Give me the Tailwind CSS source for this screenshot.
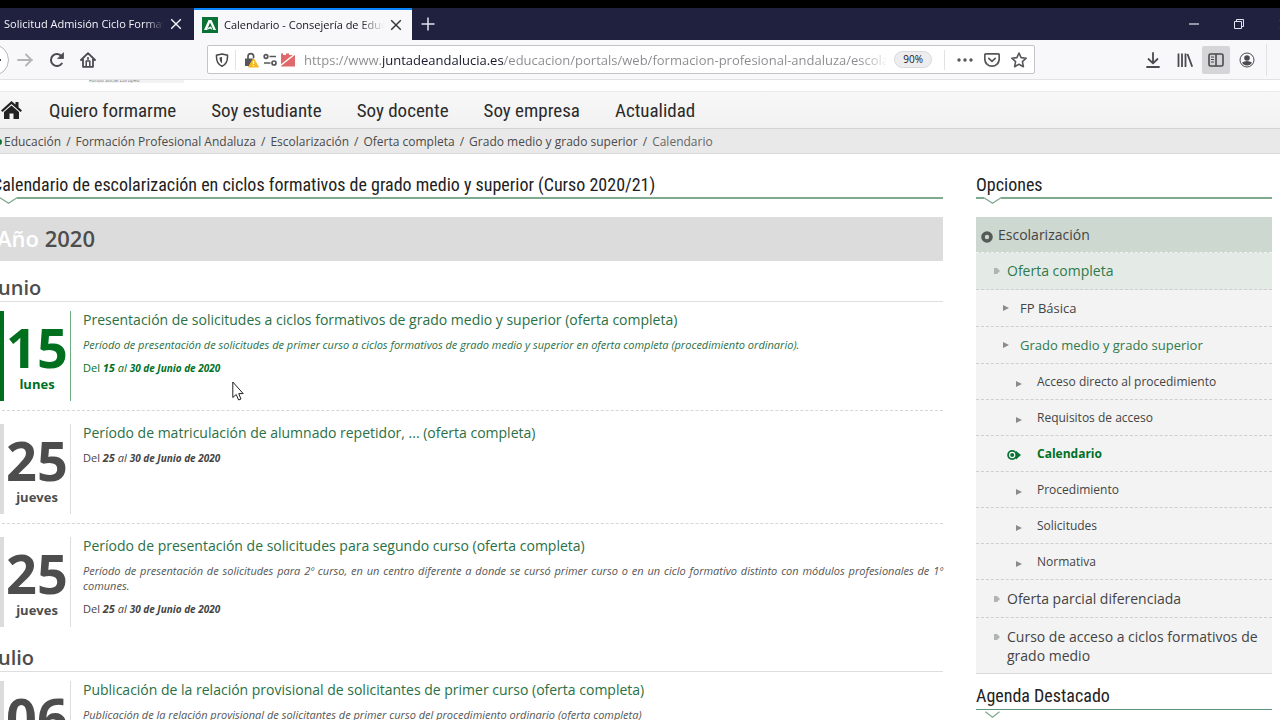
<!DOCTYPE html>
<html lang="es">
<head>
<meta charset="utf-8">
<meta name="viewport" content="width=device-width, initial-scale=1">
<title>Calendario - Consejería de Educación</title>
<script src="https://cdn.jsdelivr.net/npm/@tailwindcss/browser@4"></script>
</head>
<body class="flex h-screen flex-col overflow-hidden bg-white font-['Open_Sans',sans-serif] text-[#444]">
<svg class="hidden" aria-hidden="true">
  <symbol id="tri" viewBox="0 0 6 6"><path d="M0 0L6 3L0 6Z" fill="#8b8b8b"/></symbol>
  <symbol id="dee" viewBox="0 0 6 8"><path d="M0 1H3L6 4L3 7H0Z" fill="#b0b5b2"/></symbol>
  <symbol id="x" viewBox="0 0 10 10"><path d="M1 1L9 9M9 1L1 9" stroke="currentColor" stroke-width="1.2" fill="none"/></symbol>
</svg>

<!-- Browser window -->
<header class="shrink-0 border-t-8 border-black">
  <div class="flex h-8 items-stretch bg-[#20203f]">
    <div class="flex w-[194px] shrink-0 items-center pr-3 pl-1 text-[#f4f4fa]">
      <span class="w-40 overflow-hidden pt-px text-[11px] whitespace-nowrap [mask-image:linear-gradient(to_right,#000_88%,transparent)]">Solicitud Admisión Ciclo Formativo</span>
      <button class="ml-auto" aria-label="Cerrar pestaña"><svg class="size-3"><use href="#x"/></svg></button>
    </div>
    <div class="flex w-[218px] shrink-0 items-center border-t-2 border-[#0a84ff] bg-[#f8f8fa] pr-[10px] pl-2 text-[#15141a]">
      <svg class="mr-[6px] size-4 shrink-0" viewBox="0 0 16 16"><path fill="#0a7135" d="M0 0h16v16H0z"/><path d="M2 13L6.500 3H9.500L14 13H11.500L8 5.500L5 13Z" fill="#fff"/><path d="M6.500 10.500L9 9.500L10.500 13L8 11.500L5 13Z" fill="#fff"/></svg>
      <span class="w-40 overflow-hidden text-[11px] whitespace-nowrap [mask-image:linear-gradient(to_right,#000_85%,transparent)]">Calendario - Consejería de Educación</span>
      <button class="ml-auto text-[#333]" aria-label="Cerrar pestaña"><svg class="size-3"><use href="#x"/></svg></button>
    </div>
    <button class="ml-[6px] w-5 text-[#e4e4ee]" aria-label="Nueva pestaña"><svg class="mx-auto size-4" viewBox="0 0 16 16"><path d="M8 1.500V14.500M1.500 8H14.500" stroke="currentColor" stroke-width="1.500"/></svg></button>
    <div class="-mr-[9px] ml-auto flex items-center gap-[35px] text-[#e4e4ee]">
      <button aria-label="Minimizar"><svg class="size-[10px]" viewBox="0 0 10 10"><path d="M0 5H10" stroke="currentColor" stroke-width="1.200"/></svg></button>
      <button aria-label="Restaurar"><svg class="size-[10px]" viewBox="0 0 10 10" fill="none" stroke="currentColor"><path d="M.5 2.500H7.500V9.500H.5ZM2.500 2.500V.5H9.500V7.500H7.500"/></svg></button>
      <button aria-label="Cerrar"><svg class="size-[10px]"><use href="#x"/></svg></button>
    </div>
  </div>

  <div class="flex h-10 items-center border-b border-[#e2e2e4] bg-[#f8f8fa] text-[#4a4a4f]">
    <button class="-ml-[23px] grid size-8 shrink-0 place-items-center rounded-full border border-[#b9b9bd] bg-white" aria-label="Atrás"><svg class="size-4" viewBox="0 0 16 16" fill="none" stroke="currentColor" stroke-width="1.800"><path d="M17 8H2M8 3L3 8L8 13"/></svg></button>
    <button class="ml-2 text-[#b4b4b6]" aria-label="Adelante"><svg class="size-4" viewBox="0 0 16 16" fill="none" stroke="currentColor" stroke-width="1.800" stroke-linecap="round" stroke-linejoin="round"><path d="M1 8H15M9 2.500L14.500 8L9 13.500"/></svg></button>
    <button class="ml-4" aria-label="Recargar"><svg class="size-4" viewBox="0 0 16 16" fill="none" stroke="currentColor" stroke-width="2" stroke-linecap="round"><path d="M12.800 11.500A6 6 0 1 1 12.500 4"/><path d="M14.500 1V6.500H9Z" fill="currentColor" stroke-width=".8"/></svg></button>
    <button class="ml-[15px]" aria-label="Inicio"><svg class="size-4" viewBox="0 0 16 16" fill="none" stroke="currentColor" stroke-width="1.800" stroke-linecap="round" stroke-linejoin="round"><path d="M1 8L8 1.200L15 8M3 7.500V14.800H13V7.500"/><path d="M6.200 14.500V9H9.800V14.500" stroke-width="1.500"/><path d="M8 6V7" /></svg></button>

    <div class="ml-[111px] flex h-[29px] w-[828px] shrink items-center rounded-xs border border-[#c4c4c8] bg-white px-[7px]">
      <svg class="size-[14px] shrink-0" viewBox="0 0 14 14" fill="none" stroke="currentColor" stroke-width="1.500"><path d="M7 1L12.500 2.200C12.800 7.500 11 11.500 7 13.200C3 11.500 1.200 7.500 1.500 2.200Z"/><path d="M7 4V10.200C5 9 4.500 7 4.500 4.500Z" fill="currentColor" stroke="none"/></svg>
      <span class="mr-2 ml-[6px] h-5 w-px bg-[#e2e2e4]"></span>
      <svg class="size-4 shrink-0" viewBox="0 0 16 16"><path d="M4 7V4.500a2.800 2.800 0 0 1 5.600 0V6" fill="none" stroke="#57575b" stroke-width="1.700"/><path d="M1 6.500H10V14H1Z" fill="#57575b"/><path d="M9.500 6.500L14.500 15H4.500Z" fill="#f5b921" stroke="#f5b921" stroke-linejoin="round"/><path d="M9.500 9V12M9.500 13V14" stroke="#fff" stroke-width="1.300"/></svg>
      <svg class="ml-[2px] size-4 shrink-0" viewBox="0 0 16 16" fill="none" stroke="#57575b" stroke-width="1.700"><circle cx="4" cy="4.500" r="1.800"/><path d="M7.500 4.500H14M2 11H8.500"/><circle cx="12" cy="11" r="2"/></svg>
      <svg class="ml-[2px] size-4 shrink-0" viewBox="0 0 16 16"><path d="M1 1.500H3V3H6V1.500H9V3H15V14.500H1Z" fill="#e0696b"/><path d="M.5 13.500L15 2" stroke="#fff" stroke-width="1.500"/></svg>
      <input type="text" aria-label="Dirección" class="ml-2 w-0 flex-1 bg-[linear-gradient(to_right,#8a8a8e_78px,#17172b_78px,#17172b_200px,#8a8a8e_200px,#8a8a8e_555px,transparent_586px)] bg-clip-text pt-[2px] text-[13px] text-transparent outline-none" value="https://www.juntadeandalucia.es/educacion/portals/web/formacion-profesional-andaluza/escolarizacion">
      <button class="ml-2 h-[17px] rounded-full border border-[#d9d9dc] bg-[#ededf0] px-2 text-[10px] leading-[15px] text-[#15141a]">90%</button>
      <span class="mr-3 ml-3 h-5 w-px bg-[#e2e2e4]"></span>
      <button aria-label="Acciones"><svg class="size-4" viewBox="0 0 16 16" fill="#57575b"><circle cx="2" cy="8" r="1.700"/><circle cx="8" cy="8" r="1.700"/><circle cx="14" cy="8" r="1.700"/></svg></button>
      <button class="ml-[11px]" aria-label="Guardar en Pocket"><svg class="size-4" viewBox="0 0 16 16" fill="none" stroke="#57575b" stroke-width="1.700" stroke-linecap="round" stroke-linejoin="round"><path d="M2 1.800H14Q15.200 1.800 15.200 3V7A7.200 7.200 0 0 1 .8 7V3Q.8 1.800 2 1.800Z"/><path d="M4.800 6.300L8 9.300L11.200 6.300"/></svg></button>
      <button class="ml-[11px]" aria-label="Marcador"><svg class="size-4" viewBox="0 0 16 16" fill="none" stroke="#57575b" stroke-width="1.600" stroke-linejoin="round"><path d="M8 1L10.100 5.600L15.200 6.200L11.400 9.600L12.400 14.700L8 12.200L3.600 14.700L4.600 9.600L.8 6.200L5.900 5.600Z"/></svg></button>
    </div>

    <div class="ml-auto flex items-center">
      <button aria-label="Descargas"><svg class="size-4" viewBox="0 0 16 16" fill="none" stroke="currentColor" stroke-width="1.800" stroke-linecap="round" stroke-linejoin="round"><path d="M8 1V11M3.500 7L8 11.300L12.500 7M2 15H14"/></svg></button>
      <button class="ml-4" aria-label="Biblioteca"><svg class="size-4" viewBox="0 0 16 16" fill="none" stroke="currentColor" stroke-width="1.800"><path d="M1.500 1.500V15M5 1.500V15M8.500 1.500V15M10.500 2L15.200 14.800"/></svg></button>
      <button class="ml-[9px] grid size-7 place-items-center rounded-xs bg-[#d5d5d7]" aria-label="Barra lateral"><svg class="size-4" viewBox="0 0 16 16" fill="none" stroke="currentColor" stroke-width="1.600"><rect x="1" y="2" width="14" height="12" rx="1.500"/><path d="M8 2V14" /><path d="M3 5H6M3 7.500H6M3 10H6" stroke-width="1"/></svg></button>
      <button class="ml-[9px]" aria-label="Cuenta"><svg class="size-4" viewBox="0 0 16 16"><circle cx="8" cy="8" r="7" fill="none" stroke="currentColor" stroke-width="1"/><circle cx="8" cy="6" r="2.800" fill="currentColor"/><path d="M3 10.500Q8 7.500 13 10.500Q11.500 13.500 8 13.500Q4.500 13.500 3 10.500Z" fill="currentColor"/></svg></button>
      <span class="mr-[13px] ml-[11px] h-8 w-px bg-[#e2e2e4]"></span>
    </div>
  </div>
</header>

<!-- Web page -->
<div class="relative min-h-0 flex-1 overflow-hidden">
  <div class="flex h-[11px] items-start pl-[89px]"><span class="h-[3px] w-[95px] overflow-hidden bg-[#f3f3f3] text-[5px] leading-[1px] text-[#777]">Fondo Social Europeo</span></div>

  <nav class="flex h-[38px] items-center gap-[35px] border-t border-b border-t-[#ececec] border-b-[#d2d2d2] bg-linear-to-b from-[#f8f8f8] to-[#f1f1f1] pt-px font-['Liberation_Sans_Narrow','Arial_Narrow','Roboto_Condensed','Liberation_Sans',sans-serif] text-[19px] leading-6 text-[#2b2b2b]" aria-label="Principal">
    <a href="#" class="-mr-2" aria-label="Inicio"><svg class="ml-px h-[19px] w-[21px]" viewBox="0 0 21 19" fill="#222"><path d="M10.500 0L14.500 3.500V1H17.500V6.200L21 9.500L19.500 11L10.500 3L1.500 11L0 9.500Z"/><path d="M10.500 4.500L18 11V18H12.500V12.500H8.500V18H3V11Z"/></svg></a>
    <a href="#">Quiero formarme</a><a href="#">Soy estudiante</a><a href="#">Soy docente</a><a href="#">Soy empresa</a><a href="#">Actualidad</a>
  </nav>

  <nav class="flex h-[25px] items-center border-b border-[#d9d9d9] bg-[#e9e9e9] pt-[2px] text-xs text-[#4a4a4a]" aria-label="Ruta">
    <span class="-ml-1 mr-[2px] size-[6px] rounded-full bg-[#0a7135]"></span>
    <ol class="flex gap-[5px] whitespace-nowrap">
      <li><a href="#">Educación</a></li><li>/</li>
      <li><a href="#">Formación Profesional Andaluza</a></li><li>/</li>
      <li><a href="#">Escolarización</a></li><li>/</li>
      <li><a href="#">Oferta completa</a></li><li>/</li>
      <li><a href="#">Grado medio y grado superior</a></li><li>/</li>
      <li class="text-[#666]">Calendario</li>
    </ol>
  </nav>

  <div class="mr-2 -ml-2 grid grid-cols-[minmax(0,1fr)_296px] gap-[33px] pt-[19px]">
    <main>
      <h1 class="font-['Liberation_Sans_Narrow','Arial_Narrow','Roboto_Condensed','Liberation_Sans',sans-serif] text-lg leading-6 text-[#222]">Calendario de escolarización en ciclos formativos de grado medio y superior (Curso 2020/21)</h1>
      <div class="flex h-5 items-start"><span class="h-[2px] w-2 bg-[#7faa90]"></span><svg class="h-[7px] w-[17px]" viewBox="0 0 17 7" fill="none" stroke="#7faa90" stroke-width="1.300"><path d="M0 .8L8.500 6.200L17 .8"/></svg><span class="h-[2px] flex-1 bg-[#7faa90]"></span></div>
      <h2 class="h-11 bg-[#dcdcdc] pl-[5px] text-[22px] leading-[42px] font-semibold text-[#4d4d4d]"><span class="text-white">Año</span> 2020</h2>

      <h3 class="mt-3 h-[29px] border-b border-[#dedede] text-xl leading-[30px] font-semibold text-[#4d4d4d]">Junio</h3>
      <article class="mt-[9px] flex border-b border-dashed border-[#d6d6d6] pb-[9px] text-[#00701f]">
        <div class="flex h-[90px] w-[79px] shrink-0 flex-col items-center border-r border-l-12 border-r-[#6fae80] border-l-[#00701f] font-bold"><span class="mt-[7px] text-[54px] leading-[58px]">15</span><span class="text-[13px] leading-4">lunes</span></div>
        <div class="min-w-0 flex-1 pl-3 text-[11px] leading-[15px]">
          <h4 class="text-sm leading-[18px] text-[#2a7044]"><a href="#">Presentación de solicitudes a ciclos formativos de grado medio y superior (oferta completa)</a></h4>
          <p class="mt-2 text-[#2a7044] italic">Período de presentación de solicitudes de primer curso a ciclos formativos de grado medio y superior en oferta completa (procedimiento ordinario).</p>
          <p class="mt-2">Del <em><b>15</b> al <b class="text-[10px]">30 de Junio de 2020</b></em></p>
        </div>
      </article>
      <article class="mt-[13px] flex border-b border-dashed border-[#d6d6d6] pb-[9px]">
        <div class="flex h-[90px] w-[79px] shrink-0 flex-col items-center border-r border-l-12 border-r-[#dcdcdc] border-l-[#dcdcdc] font-bold text-[#4d4d4d]"><span class="mt-[7px] text-[54px] leading-[58px]">25</span><span class="text-[13px] leading-4">jueves</span></div>
        <div class="min-w-0 flex-1 pl-3 text-[11px] leading-[15px]">
          <h4 class="text-sm leading-[18px] text-[#2a7044]"><a href="#">Período de matriculación de alumnado repetidor, ... (oferta completa)</a></h4>
          <p class="mt-2">Del <em><b>25</b> al <b class="text-[10px]">30 de Junio de 2020</b></em></p>
        </div>
      </article>
      <article class="mt-[13px] flex">
        <div class="flex h-[90px] w-[79px] shrink-0 flex-col items-center border-r border-l-12 border-r-[#dcdcdc] border-l-[#dcdcdc] font-bold text-[#4d4d4d]"><span class="mt-[7px] text-[54px] leading-[58px]">25</span><span class="text-[13px] leading-4">jueves</span></div>
        <div class="min-w-0 flex-1 pl-3 text-[11px] leading-[15px]">
          <h4 class="text-sm leading-[18px] text-[#2a7044]"><a href="#">Período de presentación de solicitudes para segundo curso (oferta completa)</a></h4>
          <p class="mt-2 text-justify text-[#555] italic">Período de presentación de solicitudes para 2º curso, en un centro diferente a donde se cursó primer curso o en un ciclo formativo distinto con módulos profesionales de 1º comunes.</p>
          <p class="mt-2">Del <em><b>25</b> al <b class="text-[10px]">30 de Junio de 2020</b></em></p>
        </div>
      </article>

      <h3 class="mt-4 h-[29px] border-b border-[#dedede] text-xl leading-[30px] font-semibold text-[#4d4d4d]">Julio</h3>
      <article class="mt-[9px] flex">
        <div class="flex h-[90px] w-[79px] shrink-0 flex-col items-center border-r border-l-12 border-r-[#dcdcdc] border-l-[#dcdcdc] font-bold text-[#4d4d4d]"><span class="mt-[7px] text-[54px] leading-[58px]">06</span><span class="text-[13px] leading-4">lunes</span></div>
        <div class="min-w-0 flex-1 pl-3 text-[11px] leading-[15px]">
          <h4 class="text-sm leading-[18px] text-[#2a7044]"><a href="#">Publicación de la relación provisional de solicitantes de primer curso (oferta completa)</a></h4>
          <p class="mt-2 text-[#555] italic">Publicación de la relación provisional de solicitantes de primer curso del procedimiento ordinario (oferta completa)</p>
        </div>
      </article>
    </main>

    <aside>
      <h2 class="font-['Liberation_Sans_Narrow','Arial_Narrow','Roboto_Condensed','Liberation_Sans',sans-serif] text-lg leading-6 text-[#222]">Opciones</h2>
      <div class="flex h-5 items-start"><span class="h-[2px] w-2 bg-[#7faa90]"></span><svg class="h-[7px] w-[17px]" viewBox="0 0 17 7" fill="none" stroke="#7faa90" stroke-width="1.300"><path d="M0 .8L8.500 6.200L17 .8"/></svg><span class="h-[2px] flex-1 bg-[#7faa90]"></span></div>
      <ul class="divide-y divide-dashed divide-[#cfcfcf] border-b border-[#d9d9d9] bg-[#f3f3f3] text-[13px] leading-[19px]">
        <li class="flex h-9 items-center border-[#f3f3f3] bg-[#cdd8d0] pl-[5px] text-sm"><svg class="mt-1 mr-[5px] size-3" viewBox="0 0 12 12"><circle cx="6" cy="6" r="4" fill="none" stroke="#555b57" stroke-width="3.600"/></svg><a href="#">Escolarización</a></li>
        <li class="flex h-[37px] items-center bg-[#e4ebe6] pl-[18px] text-sm text-[#2f7a4c]"><svg class="mr-[7px] h-2 w-[6px]"><use href="#dee"/></svg><a href="#">Oferta completa</a></li>
        <li class="flex h-[37px] items-center pl-[27px]"><svg class="mr-[11px] size-[6px]"><use href="#tri"/></svg><a href="#">FP Básica</a></li>
        <li class="flex h-[37px] items-center pl-[27px] text-[#2f7a4c]"><svg class="mr-[11px] size-[6px]"><use href="#tri"/></svg><a href="#">Grado medio y grado superior</a></li>
        <li class="flex h-9 items-center pl-10 text-xs"><svg class="mt-1 mr-[15px] size-[6px]"><use href="#tri"/></svg><a href="#">Acceso directo al procedimiento</a></li>
        <li class="flex h-9 items-center pl-10 text-xs"><svg class="mt-1 mr-[15px] size-[6px]"><use href="#tri"/></svg><a href="#">Requisitos de acceso</a></li>
        <li class="flex h-9 items-center pl-[31px] text-xs font-bold text-[#00701f]"><svg class="mt-[2px] mr-4 h-[10px] w-[14px]" viewBox="0 0 14 10"><path d="M9 1L14 5L9 9.500Z" fill="#0a7135"/><circle cx="5.200" cy="5" r="5" fill="#0a7135"/><circle cx="5.200" cy="5" r="2.600" fill="none" stroke="#fff" stroke-width="1.100"/></svg><a href="#" aria-current="page">Calendario</a></li>
        <li class="flex h-9 items-center pl-10 text-xs"><svg class="mt-1 mr-[15px] size-[6px]"><use href="#tri"/></svg><a href="#">Procedimiento</a></li>
        <li class="flex h-9 items-center pl-10 text-xs"><svg class="mt-1 mr-[15px] size-[6px]"><use href="#tri"/></svg><a href="#">Solicitudes</a></li>
        <li class="flex h-9 items-center pl-10 text-xs"><svg class="mt-1 mr-[15px] size-[6px]"><use href="#tri"/></svg><a href="#">Normativa</a></li>
        <li class="flex h-[38px] items-center pl-[18px] text-sm"><svg class="mr-[7px] h-2 w-[6px]"><use href="#dee"/></svg><a href="#">Oferta parcial diferenciada</a></li>
        <li class="flex items-start pt-[9px] pb-2 pl-[18px] text-sm leading-[19px]"><svg class="mt-[6px] mr-[7px] h-2 w-[6px] shrink-0"><use href="#dee"/></svg><a href="#">Curso de acceso a ciclos formativos de grado medio</a></li>
      </ul>
      <h2 class="mt-[10px] border-b border-[#5f957a] pb-px font-['Liberation_Sans_Narrow','Arial_Narrow','Roboto_Condensed','Liberation_Sans',sans-serif] text-lg leading-6 text-[#222]">Agenda Destacado</h2>
      <svg class="mt-px ml-2 h-[7px] w-[17px]" viewBox="0 0 17 7" fill="none" stroke="#7faa90" stroke-width="1.300"><path d="M1.500 .8L8.500 6.200L15.500 .8"/></svg>
    </aside>
  </div>
</div>

<svg class="pointer-events-none absolute top-[381px] left-[232px] h-5 w-3" viewBox="0 0 12 20"><path d="M.8 1V16.500L4.200 13.500L6.600 19L9 18L6.700 12.600H11.200Z" fill="#fff" stroke="#222" stroke-width="1"/></svg>
</body>
</html>
